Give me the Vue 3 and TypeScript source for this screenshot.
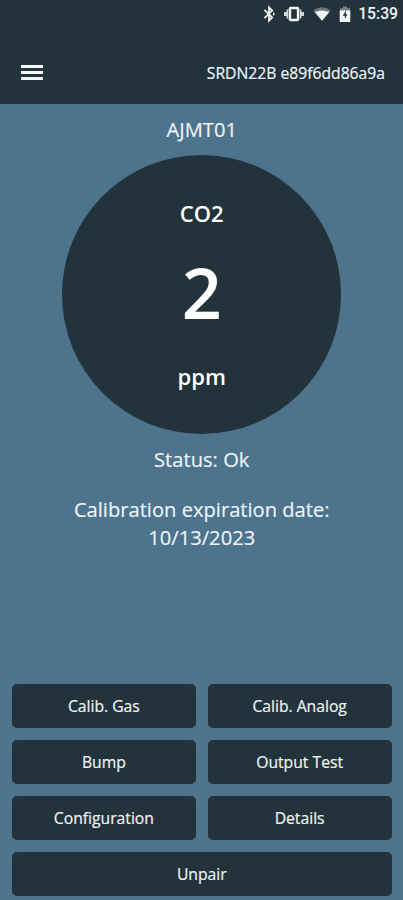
<script setup lang="ts">
interface Action {
  label: string
  wide?: boolean
}

const time = '15:39'
const device = 'SRDN22B e89f6dd86a9a'
const tag = 'AJMT01'
const reading = { gas: 'CO2', value: 2, unit: 'ppm' }
const status = 'Ok'
const expiration = '10/13/2023'

const actions: Action[] = [
  { label: 'Calib. Gas' },
  { label: 'Calib. Analog' },
  { label: 'Bump' },
  { label: 'Output Test' },
  { label: 'Configuration' },
  { label: 'Details' },
  { label: 'Unpair', wide: true },
]
</script>

<template>
  <div class="screen">
    <header class="top">
      <div class="statusbar">
        <svg class="bluetooth" width="12" height="18" viewBox="0 0 12 18" aria-hidden="true">
          <path d="M1.4 4.9 L9.2 12.4 L6 15.6 V2.4 L9.2 5.6 L1.4 13.1" fill="none" stroke="currentColor" stroke-width="1.8" />
          <path d="M10 7 L12 9 L10 11 Z" fill="currentColor" />
        </svg>
        <svg class="vibrate" width="22" height="18" viewBox="0 0 22 18" aria-hidden="true">
          <path d="M5 4.5 H3.6 V7 H1 V11 H3.6 V13.5 H5 Z M17 4.5 H18.4 V7 H21 V11 H18.4 V13.5 H17 Z" fill="currentColor" opacity="0.85" />
          <rect x="6.9" y="3" width="8.2" height="12" rx="1" fill="none" stroke="currentColor" stroke-width="2.6" />
        </svg>
        <svg class="wifi" width="18" height="14" viewBox="0 0 18 14" aria-hidden="true">
          <path d="M0.2 3.5 Q9 -3 17.8 3.5 L9 13.8 Z" fill="currentColor" opacity="0.35" />
          <path d="M1.7 5 Q9 1.8 16.3 5 L9 13.8 Z" fill="currentColor" />
        </svg>
        <svg class="battery" width="12" height="17" viewBox="0 0 12 17" aria-hidden="true">
          <path d="M4 0.5 H8 V2.3 H11 V5 H1 V2.3 H4 Z" fill="currentColor" opacity="0.4" />
          <path d="M0.7 4.5 H11.3 V16 H0.7 Z" fill="currentColor" />
          <path d="M6.8 4.5 L3.8 9.8 H5.8 V13 L8.4 8.3 H6.8 Z" fill="#22333b" />
        </svg>
        <span class="time">{{ time }}</span>
      </div>
      <div class="appbar">
        <button class="menu" aria-label="Menu">
          <i></i><i></i><i></i>
        </button>
        <span class="device">{{ device }}</span>
      </div>
    </header>
    <main class="content">
      <p class="tag">{{ tag }}</p>
      <section class="dial">
        <span class="gas">{{ reading.gas }}</span>
        <span class="value">{{ reading.value }}</span>
        <span class="unit">{{ reading.unit }}</span>
      </section>
      <p class="status">Status: {{ status }}</p>
      <p class="expiration">Calibration expiration date:<br />{{ expiration }}</p>
      <nav class="actions">
        <button v-for="action in actions" :key="action.label" class="action" :class="{ wide: action.wide }">
          {{ action.label }}
        </button>
      </nav>
    </main>
  </div>
</template>

<style>
body {
  margin: 0;
  background: #4e738c;
}
</style>

<style scoped>
.screen {
  display: flex;
  flex-direction: column;
  height: 900px;
  overflow: hidden;
  background: #4e738c;
  color: #eef5fa;
  font-family: "Open Sans", "Noto Sans", sans-serif;
}
.top {
  flex: none;
  height: 104px;
  background: #22333b;
}
.statusbar {
  display: flex;
  align-items: center;
  justify-content: flex-end;
  height: 28px;
  padding-right: 5px;
  color: #f2f4f5;
}
.bluetooth {
  margin-right: 8px;
}
.vibrate {
  margin-right: 8px;
}
.wifi {
  margin-right: 8px;
}
.battery {
  margin-right: 7px;
}
.time {
  font: 500 15.7px/28px Roboto, sans-serif;
}
.appbar {
  display: flex;
  align-items: center;
  justify-content: space-between;
  box-sizing: border-box;
  height: 89px;
  padding: 0 18px 0 21px;
}
.menu {
  display: flex;
  flex-direction: column;
  gap: 3px;
  width: 22px;
  padding: 0;
  border: 0;
  background: none;
}
.menu i {
  height: 3px;
  background: #f4f6f7;
}
.device {
  padding-top: 1px;
  font-size: 15.7px;
  line-height: 20px;
  -webkit-text-stroke: 0.2px currentColor;
}
.content {
  display: flex;
  flex: 1;
  flex-direction: column;
  align-items: center;
  padding: 12px 11.5px 4.5px 12px;
}
p {
  margin: 0;
  font-size: 20.15px;
  line-height: 27.5px;
  text-align: center;
  -webkit-text-stroke: 0.15px currentColor;
}
.dial {
  display: flex;
  flex-direction: column;
  align-items: center;
  box-sizing: border-box;
  width: 279px;
  height: 279px;
  margin-top: 11px;
  padding-top: 42px;
  border-radius: 50%;
  background: #22333b;
  color: #fff;
  font-weight: 600;
}
.gas,
.unit {
  font-size: 22px;
  line-height: 32px;
}
.value {
  margin: 13px 0 18px;
  font-size: 70px;
  line-height: 100px;
}
.status {
  margin-top: 12px;
}
.expiration {
  margin-top: 23px;
}
.actions {
  display: grid;
  grid-template-columns: 1fr 1fr;
  gap: 12px;
  width: 100%;
  margin-top: auto;
}
.action {
  height: 44px;
  padding: 0;
  border: 0;
  border-radius: 5px;
  background: #22333b;
  color: #f0f3f5;
  font: 400 15.7px/20px "Open Sans", "Noto Sans", sans-serif;
  -webkit-text-stroke: 0.2px currentColor;
}
.wide {
  grid-column: 1 / -1;
}
</style>
